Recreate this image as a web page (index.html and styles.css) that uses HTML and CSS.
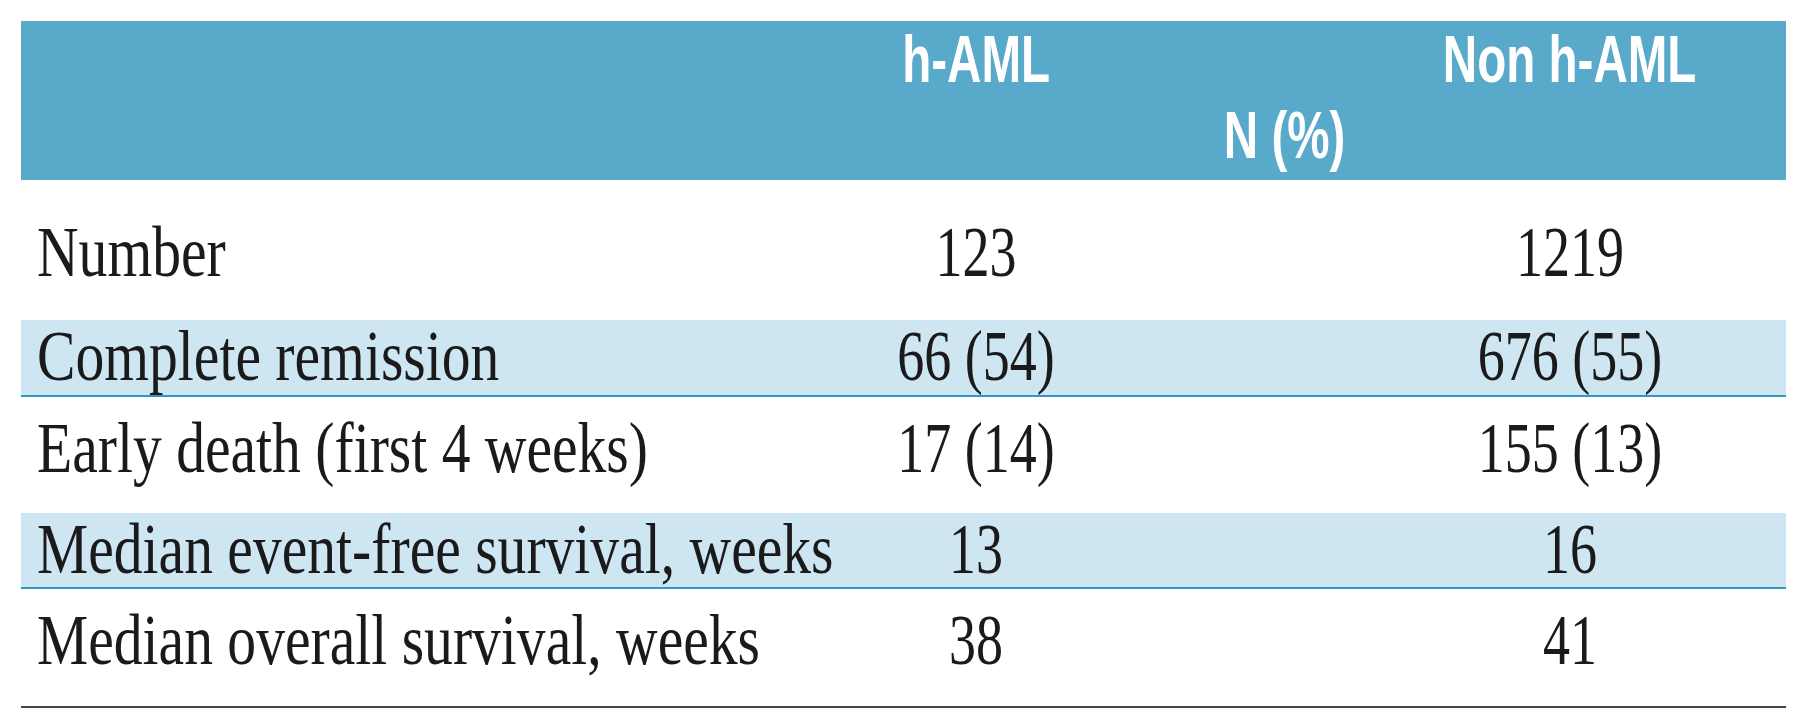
FILE: index.html
```html
<!DOCTYPE html>
<html lang="en">
<head>
<meta charset="utf-8">
<title>h-AML vs Non h-AML</title>
<link rel="stylesheet" href="styles.css">
</head>
<body>
<div class="table">
  <div class="head">
    <div class="hrow">
      <div class="cell label"></div>
      <div class="cell val"><span class="htxt">h-AML</span></div>
      <div class="cell mid"></div>
      <div class="cell val"><span class="htxt">Non h-AML</span></div>
      <div class="cell"></div>
    </div>
    <div class="hrow">
      <div class="cell label"></div>
      <div class="cell val"></div>
      <div class="cell mid npct"><span class="htxt">N (%)</span></div>
      <div class="cell val"></div>
      <div class="cell"></div>
    </div>
  </div>
  <div class="row r-first">
    <div class="cell label"><span class="ltxt">Number</span></div>
    <div class="cell val"><span class="vtxt">123</span></div>
    <div class="cell mid"></div>
    <div class="cell val"><span class="vtxt">1219</span></div>
    <div class="cell"></div>
  </div>
  <div class="row band b1">
    <div class="cell label"><span class="ltxt">Complete remission</span></div>
    <div class="cell val"><span class="vtxt">66 (54)</span></div>
    <div class="cell mid"></div>
    <div class="cell val"><span class="vtxt">676 (55)</span></div>
    <div class="cell"></div>
  </div>
  <div class="row plain p1">
    <div class="cell label"><span class="ltxt">Early death (first 4 weeks)</span></div>
    <div class="cell val"><span class="vtxt">17 (14)</span></div>
    <div class="cell mid"></div>
    <div class="cell val"><span class="vtxt">155 (13)</span></div>
    <div class="cell"></div>
  </div>
  <div class="row band b2">
    <div class="cell label"><span class="ltxt">Median event-free survival, weeks</span></div>
    <div class="cell val"><span class="vtxt">13</span></div>
    <div class="cell mid"></div>
    <div class="cell val"><span class="vtxt">16</span></div>
    <div class="cell"></div>
  </div>
  <div class="row plain p2 last">
    <div class="cell label"><span class="ltxt">Median overall survival, weeks</span></div>
    <div class="cell val"><span class="vtxt">38</span></div>
    <div class="cell mid"></div>
    <div class="cell val"><span class="vtxt">41</span></div>
    <div class="cell"></div>
  </div>
</div>
</body>
</html>
```
FILE: styles.css
```css
* { box-sizing: border-box; }
html, body { margin: 0; padding: 0; background: #ffffff; }
body { padding: 21px 14px 0 21px; }

.table {
  width: 1765px;
  color: #1a1a1a;
  font-family: "Liberation Serif", "Times New Roman", serif;
}

.head {
  background: #58a9ca;
  height: 159px;
  padding: 4px 0 12px 0;
  display: flex;
  flex-direction: column;
  gap: 9px;
}

.hrow, .row {
  display: grid;
  grid-template-columns: 755px 400px 194px 400px 16px;
}

.hrow { height: 67px; }

.cell {
  display: flex;
  align-items: flex-end;
  white-space: nowrap;
}
.cell.val, .cell.mid { justify-content: center; }
.cell.label { padding-left: 16px; }
.cell.npct { padding-left: 24px; }

.htxt {
  display: inline-block;
  font-family: "Liberation Sans", Arial, sans-serif;
  font-weight: bold;
  font-size: 67px;
  line-height: 67px;
  color: #ffffff;
  transform: scaleX(0.71);
  transform-origin: center bottom;
}

.ltxt, .vtxt {
  display: inline-block;
  font-size: 72px;
  line-height: 72px;
}
.ltxt {
  transform: scaleX(0.8);
  transform-origin: left bottom;
}
.vtxt {
  transform: scaleX(0.75);
  transform-origin: center bottom;
}

.r-first { height: 140px; padding-bottom: 32px; }
.band {
  background: #cee5f2;
  border-bottom: 2px solid #2f97c6;
}
.b1 { height: 77px; padding-bottom: 10px; }
.b2 { height: 76px; padding-bottom: 8px; }
.p1 { height: 116px; padding-bottom: 29px; }
.p2 { height: 119px; padding-bottom: 30px; }
.last { border-bottom: 2px solid #444444; }
```
